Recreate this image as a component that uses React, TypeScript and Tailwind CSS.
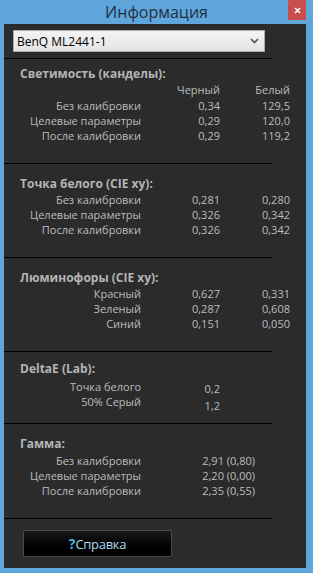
import React from "react";

// Info window: monitor calibration summary
interface Row {
  label: string;
  a: string;
  b?: string;
}

const luminance: Row[] = [
  { label: "Без калибровки", a: "0,34", b: "129,5" },
  { label: "Целевые параметры", a: "0,29", b: "120,0" },
  { label: "После калибровки", a: "0,29", b: "119,2" },
];

const whitePoint: Row[] = [
  { label: "Без калибровки", a: "0,281", b: "0,280" },
  { label: "Целевые параметры", a: "0,326", b: "0,342" },
  { label: "После калибровки", a: "0,326", b: "0,342" },
];

const phosphors: Row[] = [
  { label: "Красный", a: "0,627", b: "0,331" },
  { label: "Зеленый", a: "0,287", b: "0,608" },
  { label: "Синий", a: "0,151", b: "0,050" },
];

const gamma: Row[] = [
  { label: "Без калибровки", a: "2,91 (0,80)" },
  { label: "Целевые параметры", a: "2,20 (0,00)" },
  { label: "После калибровки", a: "2,35 (0,55)" },
];

const Divider = () => <div className="h-px w-[268px] bg-black" />;

const Heading = ({ children }: { children: React.ReactNode }) => (
  <h2 className="pl-[16px] text-[12px] leading-[17px] font-bold text-[#b4b4b4]">
    {children}
  </h2>
);

const renderRows = (rows: Row[]) => (
  <div className="grid grid-cols-[137px_79px_70px] text-[11px] leading-[15px] text-[#bcbcbc]">
    {rows.map((r, i) => (
      <React.Fragment key={i}>
        <span className="text-right whitespace-nowrap">{r.label}</span>
        <span className="text-right">{r.a}</span>
        <span className="text-right">{r.b}</span>
      </React.Fragment>
    ))}
  </div>
);

export default function App() {
  return (
    <div
      className="w-[313px] h-[573px] bg-[#5fa6dd] flex flex-col overflow-hidden"
      style={{ fontFamily: '"Open Sans", "Noto Sans", sans-serif' }}
    >
      {/* Title bar */}
      <div className="h-[24px] flex items-center justify-center relative shrink-0">
        <span className="text-[16px] text-[#22303e] leading-[22px] -mt-[1px]">Информация</span>
        <div className="absolute right-[7px] top-0 w-[18px] h-[20px] bg-[#c94f4f] flex items-center justify-center">
          <svg width="7" height="7" viewBox="0 0 7 7">
            <path d="M1 1 L6 6 M6 1 L1 6" stroke="#ffffff" strokeWidth="1.6" />
          </svg>
        </div>
      </div>

      {/* Content */}
      <div className="ml-[4px] mr-[7px] mb-[5px] flex-1 bg-[#2b2b2b] flex flex-col">
        <div className="mt-[6px] ml-[9px] w-[252px] h-[22px] bg-gradient-to-b from-[#f4f4f4] to-[#e4e4e4] border border-[#acacac] flex items-center justify-between px-[3px]">
          <span className="text-[12px] text-black leading-[17px]">BenQ ML2441-1</span>
          <svg width="9" height="6" viewBox="0 0 9 6" className="mr-[2px]">
            <path d="M1 1 L4.5 4.5 L8 1" stroke="#555" strokeWidth="1.6" fill="none" />
          </svg>
        </div>

        <div className="mt-[6px]">
          <Divider />
        </div>

        {/* Luminance */}
        <section className="pt-[6px] pb-[20px]">
          <Heading>Светимость (канделы):</Heading>
          <div className="grid grid-cols-[137px_79px_70px] text-[11px] leading-[15px] text-[#bcbcbc]">
            <span />
            <span className="text-right">Черный</span>
            <span className="text-right">Белый</span>
          </div>
          <div className="mt-[1px]">{renderRows(luminance)}</div>
        </section>
        <Divider />

        {/* White point */}
        <section className="pt-[11px] pb-[20px]">
          <Heading>Точка белого (CIE xy):</Heading>
          {renderRows(whitePoint)}
        </section>
        <Divider />

        {/* Phosphors */}
        <section className="pt-[11px] pb-[20px]">
          <Heading>Люминофоры (CIE xy):</Heading>
          {renderRows(phosphors)}
        </section>
        <Divider />

        {/* DeltaE */}
        <section className="pt-[8px] pb-[9px]">
          <Heading>DeltaE (Lab):</Heading>
          <div className="flex mt-[2px] text-[11px] text-[#bcbcbc]">
            <div className="w-[137px] flex flex-col items-end leading-[15px]">
              <span>Точка белого</span>
              <span>50% Серый</span>
            </div>
            <div className="w-[79px] flex flex-col items-end leading-[17px] mt-[1px]">
              <span>0,2</span>
              <span>1,2</span>
            </div>
          </div>
        </section>
        <Divider />

        {/* Gamma */}
        <section className="pt-[11px] pb-[20px]">
          <Heading>Гамма:</Heading>
          <div className="grid grid-cols-[137px_114px] text-[11px] leading-[15px] text-[#bcbcbc] mt-[1px]">
            {gamma.map((r, i) => (
              <React.Fragment key={i}>
                <span className="text-right whitespace-nowrap">{r.label}</span>
                <span className="text-right">{r.a}</span>
              </React.Fragment>
            ))}
          </div>
        </section>
        <Divider />

        <button className="mt-[11px] ml-[19px] w-[149px] h-[27px] bg-gradient-to-b from-[#1a1a1a] via-[#050505] to-[#000000] border border-[#4a4a4a] rounded-[2px] flex items-center justify-center">
          <span className="text-[14px] font-bold text-[#3cb8dc] leading-[20px]">?</span>
          <span className="text-[13px] text-[#a9dcef] leading-[20px] tracking-[-0.3px]">Справка</span>
        </button>
      </div>
    </div>
  );
}
